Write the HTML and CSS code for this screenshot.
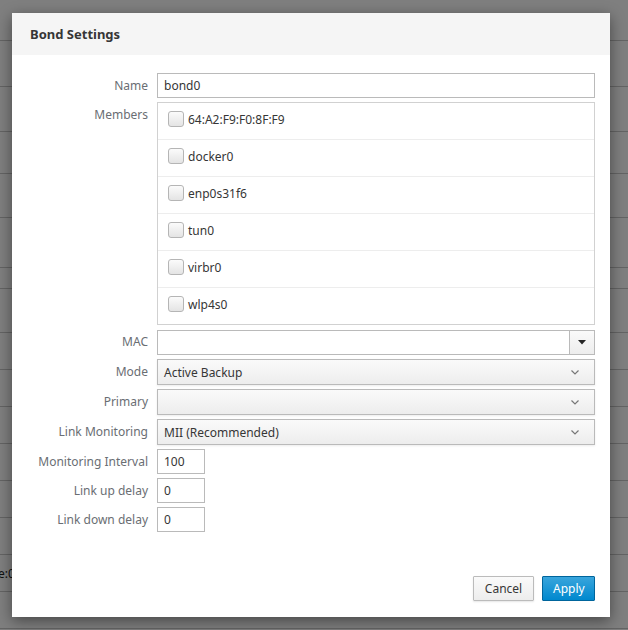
FILE: index.html
```html
<!DOCTYPE html>
<html lang="en">
<head>
    <meta charset="UTF-8">
    <meta name="viewport" content="width=device-width, initial-scale=1.0">
    <title>Bond Settings</title>
    <link rel="stylesheet" href="styles.css">
</head>
<body>
    <!-- Page behind the dialog -->
    <div class="page">
        <div class="bg-row h41"></div>
        <div class="bg-row h46"></div>
        <div class="bg-row h45"></div>
        <div class="bg-row h42"></div>
        <div class="bg-row h44"></div>
        <div class="bg-row h50"></div>
        <div class="bg-row h21"></div>
        <div class="bg-row h44"></div>
        <div class="bg-row"></div>
        <div class="bg-row"></div>
        <div class="bg-row"></div>
        <div class="bg-row"></div>
        <div class="bg-row"></div>
        <div class="bg-row"></div>
        <div class="bg-row"><span class="bg-text">e:0</span></div>
        <div class="bg-row"></div>
    </div>
    <div class="backdrop"></div>

    <div class="modal">
        <div class="modal-header">
            <h4 class="modal-title">Bond Settings</h4>
        </div>

        <div class="modal-body">
            <div class="form-grid">
                <label class="control-label">Name</label>
                <input type="text" class="form-control" value="bond0">

                <label class="control-label">Members</label>
                <ul class="members">
                    <li><input type="checkbox"><span>64:A2:F9:F0:8F:F9</span></li>
                    <li><input type="checkbox"><span>docker0</span></li>
                    <li><input type="checkbox"><span>enp0s31f6</span></li>
                    <li><input type="checkbox"><span>tun0</span></li>
                    <li><input type="checkbox"><span>virbr0</span></li>
                    <li><input type="checkbox"><span>wlp4s0</span></li>
                </ul>

                <label class="control-label">MAC</label>
                <div class="combo">
                    <input type="text" class="combo-input" value="">
                    <button class="combo-btn">
                        <svg width="8" height="5" viewBox="0 0 8 5"><path d="M0 0 L8 0 L4 4.5 Z" fill="#252525"/></svg>
                    </button>
                </div>

                <label class="control-label">Mode</label>
                <div class="select">
                    <span>Active Backup</span>
                    <svg class="chevron" width="8" height="5" viewBox="0 0 8 5"><polyline points="0.5,0.5 4,4 7.5,0.5" fill="none" stroke="#777" stroke-width="1.2"/></svg>
                </div>

                <label class="control-label">Primary</label>
                <div class="select">
                    <span></span>
                    <svg class="chevron" width="8" height="5" viewBox="0 0 8 5"><polyline points="0.5,0.5 4,4 7.5,0.5" fill="none" stroke="#777" stroke-width="1.2"/></svg>
                </div>

                <label class="control-label">Link Monitoring</label>
                <div class="select">
                    <span>MII (Recommended)</span>
                    <svg class="chevron" width="8" height="5" viewBox="0 0 8 5"><polyline points="0.5,0.5 4,4 7.5,0.5" fill="none" stroke="#777" stroke-width="1.2"/></svg>
                </div>

                <label class="control-label">Monitoring Interval</label>
                <input type="text" class="form-control short" value="100">

                <label class="control-label">Link up delay</label>
                <input type="text" class="form-control short" value="0">

                <label class="control-label">Link down delay</label>
                <input type="text" class="form-control short" value="0">
            </div>
        </div>

        <div class="modal-footer">
            <button class="btn btn-default">Cancel</button>
            <button class="btn btn-primary">Apply</button>
        </div>
    </div>
</body>
</html>
```

FILE: styles.css
```css
/* General */
body {
    margin: 0;
    font-family: "Noto Sans", "Open Sans", sans-serif;
    font-size: 12px;
    color: #363636;
    background: #fff;
    overflow: hidden;
}

/* Page behind the dialog */
.page {
    width: 628px;
    height: 630px;
    background: #fff;
}

.bg-row {
    height: 36px;
    border-bottom: 1px solid #c8c8c8;
    display: flex;
    align-items: center;
}
.bg-row.h41 { height: 40px; }
.bg-row.h46 { height: 45px; }
.bg-row.h45 { height: 44px; }
.bg-row.h42 { height: 41px; }
.bg-row.h44 { height: 43px; }
.bg-row.h50 { height: 49px; }
.bg-row.h21 { height: 20px; }

.bg-text {
    font-size: 12px;
    color: #222;
    margin-left: -2px;
}

.backdrop {
    position: absolute;
    inset: 0;
    background: rgba(0, 0, 0, 0.5);
}

/* Dialog */
.modal {
    position: absolute;
    left: 12px;
    top: 13px;
    width: 598px;
    height: 604px;
    background: #fff;
    display: flex;
    flex-direction: column;
    box-shadow: 0 4px 14px rgba(0, 0, 0, 0.45);
}

.modal-header {
    height: 42px;
    background: #f5f5f5;
    display: flex;
    align-items: center;
    padding: 0 18px;
}

.modal-title {
    margin: 0;
    font-size: 13px;
    font-weight: 700;
    color: #363636;
}

.modal-body {
    flex: 1;
    padding: 18px 15px 0 18px;
}

.form-grid {
    display: grid;
    grid-template-columns: 118px 1fr;
    column-gap: 9px;
    row-gap: 4px;
    align-items: start;
}

.control-label {
    text-align: right;
    line-height: 25px;
    color: #6a6e73;
    white-space: nowrap;
}

.form-control {
    height: 25px;
    box-sizing: border-box;
    border: 1px solid #bababa;
    padding: 0 6px;
    font-family: inherit;
    font-size: 12px;
    color: #363636;
    outline: none;
    width: 100%;
    margin: 0;
}
.form-control.short {
    width: 48px;
}

/* Members list */
.members {
    list-style: none;
    margin: 0;
    padding: 0;
    border: 1px solid #d1d1d1;
}
.members li {
    height: 32px;
    display: flex;
    align-items: center;
    padding: 0 10px 4px;
    border-bottom: 1px solid #ededed;
}
.members li:last-child {
    border-bottom: none;
}
.members input[type="checkbox"] {
    appearance: none;
    width: 16px;
    height: 16px;
    margin: 0 4px 0 0;
    border: 1px solid #b5b5b5;
    border-radius: 3px;
    background: linear-gradient(#fbfbfb, #e4e4e4);
    box-sizing: border-box;
}
.members span {
    color: #363636;
}

/* MAC combobox */
.combo {
    display: flex;
    height: 25px;
    box-sizing: border-box;
    border: 1px solid #bababa;
    margin-top: 1px;
}
.combo-input {
    flex: 1;
    border: none;
    outline: none;
    margin: 0;
    padding: 0 6px;
    font-family: inherit;
    font-size: 12px;
}
.combo-btn {
    width: 25px;
    border: none;
    border-left: 1px solid #bababa;
    background: linear-gradient(#fafafa, #ededed);
    padding: 0;
    display: flex;
    align-items: center;
    justify-content: center;
}

/* Selects */
.select {
    height: 26px;
    box-sizing: border-box;
    border: 1px solid #bababa;
    background: linear-gradient(#fafafa, #ededed);
    box-shadow: 0 1px 2px rgba(0, 0, 0, 0.08);
    display: flex;
    align-items: center;
    justify-content: space-between;
    padding: 0 15px 0 6px;
    color: #363636;
}

/* Footer */
.modal-footer {
    display: flex;
    justify-content: flex-end;
    gap: 8px;
    padding: 0 15px 16px;
}

.btn {
    height: 25px;
    font-family: inherit;
    font-size: 12px;
    padding: 0 10px;
    border-radius: 1px;
    cursor: pointer;
}
.btn-default {
    width: 61px;
    background: linear-gradient(#fafafa, #ededed);
    border: 1px solid #bbb;
    color: #363636;
    box-shadow: 0 1px 2px rgba(0, 0, 0, 0.1);
}
.btn-primary {
    width: 53px;
    background: linear-gradient(#39a5dc, #0088ce);
    border: 1px solid #00659c;
    color: #fff;
}
```
